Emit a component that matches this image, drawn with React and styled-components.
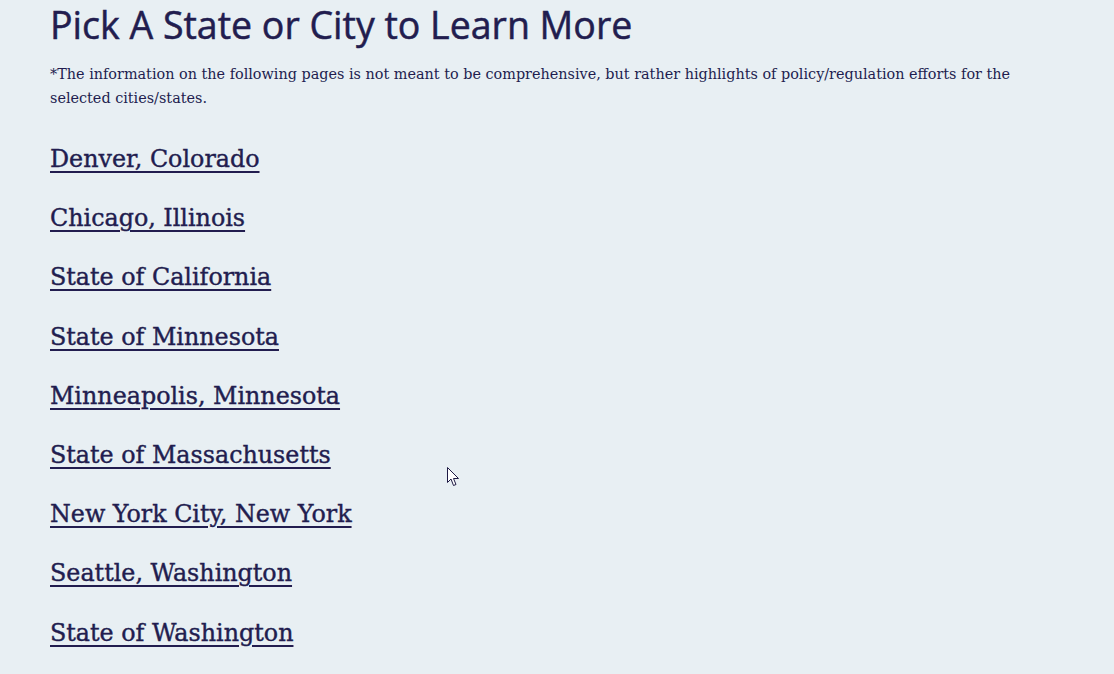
import React from 'react';
import styled, { createGlobalStyle } from 'styled-components';

const GlobalStyle = createGlobalStyle`
  html, body {
    margin: 0;
    padding: 0;
    background: #e8eff3;
  }
  body {
    color: #221d4f;
    overflow: hidden;
  }
`;

const Page = styled.main`
  position: relative;
  height: 674px;
  padding: 0 50px;
  box-sizing: border-box;
`;

const Title = styled.h1`
  margin: 0;
  padding-top: 2px;
  font-family: "Open Sans", "Noto Sans", sans-serif;
  font-weight: 500;
  font-size: 37.5px;
  line-height: 46px;
  color: #221d4f;
  -webkit-text-stroke: 0.5px #221d4f;
`;

const Note = styled.p`
  margin: 14px 0 0;
  max-width: 1000px;
  font-family: "DejaVu Serif", "Liberation Serif", serif;
  font-size: 14.4px;
  line-height: 24px;
  color: #221d4f;
`;

const LinkList = styled.ul`
  list-style: none;
  margin: 31px 0 0;
  padding: 0;
  display: flex;
  flex-direction: column;
  gap: 23.2px;
`;

const PlaceLink = styled.a`
  font-family: "DejaVu Serif", "Liberation Serif", serif;
  font-size: 23.8px;
  line-height: 36px;
  color: #221d4f;
  -webkit-text-stroke: 0.4px #221d4f;
  text-decoration: underline;
  text-underline-offset: 4px;
  text-decoration-thickness: 2px;
`;

const Cursor = styled.svg`
  position: absolute;
  left: 447px;
  top: 467px;
`;

const places = [
  'Denver, Colorado',
  'Chicago, Illinois',
  'State of California',
  'State of Minnesota',
  'Minneapolis, Minnesota',
  'State of Massachusetts',
  'New York City, New York',
  'Seattle, Washington',
  'State of Washington',
];

export default function App() {
  return (
    <>
      <GlobalStyle />
      <Page>
        <Title>Pick A State or City to Learn More</Title>
        <Note>
          *The information on the following pages is not meant to be comprehensive, but rather highlights of
          policy/regulation efforts for the selected cities/states.
        </Note>
        <LinkList>
          {places.map((p) => (
            <li key={p}>
              <PlaceLink href="#">{p}</PlaceLink>
            </li>
          ))}
        </LinkList>
        <Cursor width="13" height="20" viewBox="0 0 13 20">
          <path d="M0.5 0.5 L0.5 15.5 L4 12 L6.5 18.5 L9 17.5 L6.5 11.5 L11.5 11.5 Z" fill="#fff" stroke="#1f1a44" strokeWidth="1" />
        </Cursor>
      </Page>
    </>
  );
}
